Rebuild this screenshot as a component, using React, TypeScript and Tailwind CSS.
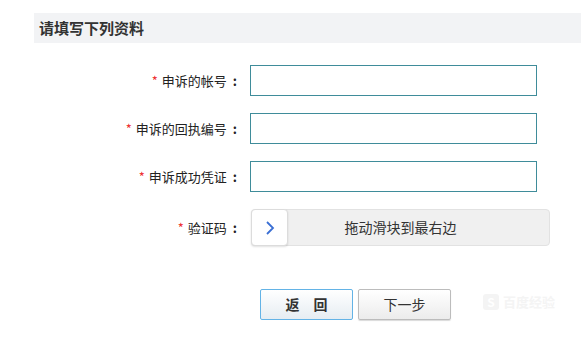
import React from "react";

const font = { fontFamily: '"Microsoft YaHei", "Noto Sans CJK SC", "Noto Sans", sans-serif' };

function Label({ text }: { text: string }) {
  return (
    <div className="w-[240px] shrink-0 flex justify-end items-center text-[13px] text-[#222] pr-[3px]">
      <span className="text-[#e33] mr-[4px] text-[13px]">*</span>
      <span>{text}</span>
      <span className="ml-[6px] font-bold">:</span>
    </div>
  );
}

export default function App() {
  return (
    <div className="w-[581px] h-[345px] bg-white relative overflow-hidden" style={font}>
      <div className="pt-[13px] pl-[34px]">
        <div className="h-[30px] bg-[#f2f3f5] flex items-center pl-[5px] text-[15px] font-bold text-[#333]">
          请填写下列资料
        </div>
      </div>
      <div className="mt-[22px] flex flex-col gap-[17px]">
        {["申诉的帐号", "申诉的回执编号", "申诉成功凭证"].map((t) => (
          <div key={t} className="flex items-center h-[31px]">
            <Label text={t} />
            <div className="ml-[10px] w-[287px] h-[31px] border border-[#3f8c9a] bg-white" />
          </div>
        ))}
        <div className="flex items-center h-[37px]">
          <Label text="验证码" />
          <div className="ml-[11px] w-[299px] h-[37px] rounded-[4px] bg-[#f0f0f0] border border-[#e2e2e2] relative flex items-center justify-center">
            <div className="absolute left-[-1px] top-[-1px] w-[37px] h-[37px] bg-white border border-[#dcdcdc] rounded-[4px] shadow-[0_1px_2px_rgba(0,0,0,0.12)] flex items-center justify-center">
              <svg width="10" height="16" viewBox="0 0 10 16">
                <path d="M2 2 L8 8 L2 14" fill="none" stroke="#3a6fd4" strokeWidth="1.8" />
              </svg>
            </div>
            <span className="text-[14px] text-[#333]">拖动滑块到最右边</span>
          </div>
        </div>
      </div>
      <div className="mt-[43px] pl-[260px] flex gap-[5px]">
        <button className="w-[93px] h-[31px] border border-[#63b3e6] rounded-[2px] bg-gradient-to-b from-white to-[#e6edf2] text-[14px] font-bold text-[#333] tracking-[14px] pl-[14px]">
          返回
        </button>
        <button className="w-[93px] h-[31px] border border-[#bcbcbc] rounded-[2px] bg-gradient-to-b from-white to-[#ececec] shadow-[0_1px_1px_rgba(0,0,0,0.15)] text-[14px] text-[#333]">
          下一步
        </button>
      </div>
      <div className="absolute left-[483px] top-[292px] flex items-center gap-[4px] text-[#f4f4f4]">
        <div className="w-[16px] h-[16px] rounded-[3px] bg-[#f4f4f4] text-white text-[12px] font-bold flex items-center justify-center">S</div>
        <span className="text-[13px] font-bold">百度经验</span>
      </div>
    </div>
  );
}
